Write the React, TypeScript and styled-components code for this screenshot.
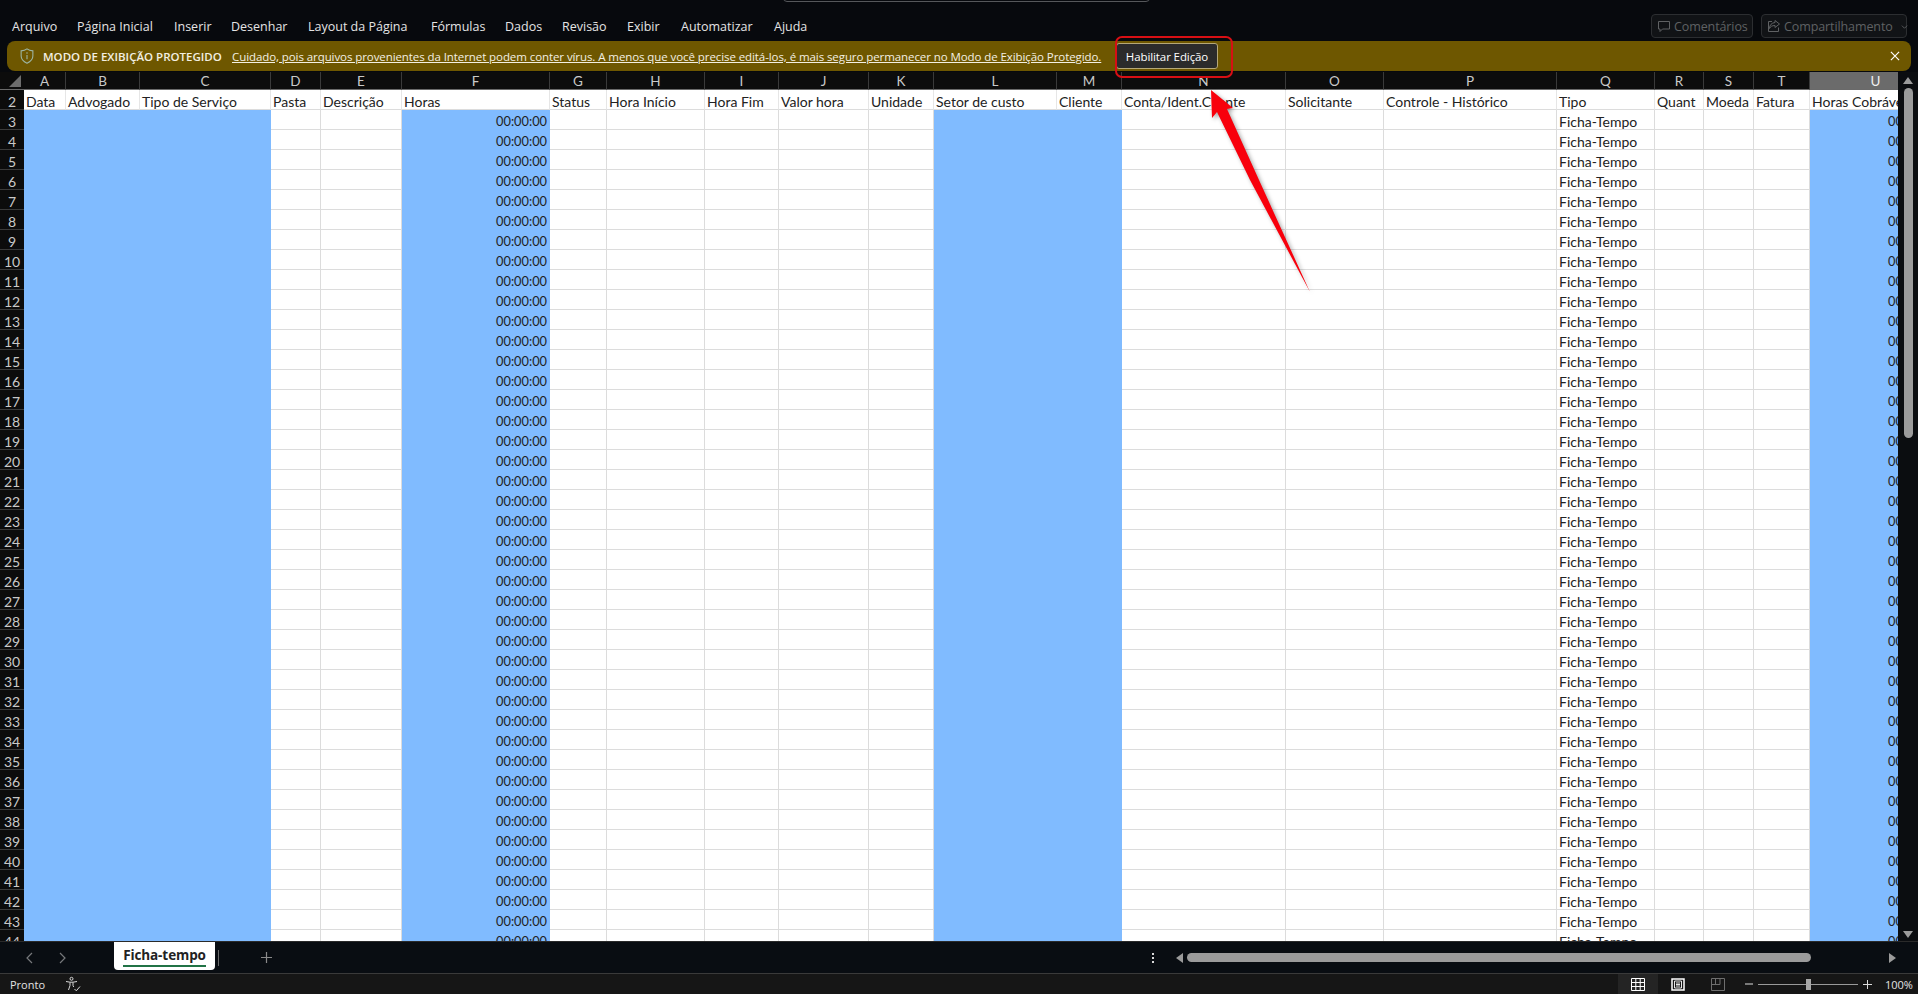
import React from "react";
import styled, { createGlobalStyle } from "styled-components";

const GlobalStyle = createGlobalStyle`
  html, body {
    margin: 0;
    height: 100%;
    overflow: hidden;
    background: #07090d;
  }
`;

const COLUMNS = [
  { name: "A", width: 42, title: "Data", fill: true },
  { name: "B", width: 74, title: "Advogado", fill: true },
  { name: "C", width: 131, title: "Tipo de Serviço", fill: true },
  { name: "D", width: 50, title: "Pasta" },
  { name: "E", width: 81, title: "Descrição" },
  { name: "F", width: 148, title: "Horas", fill: true, value: "00:00:00" },
  { name: "G", width: 57, title: "Status" },
  { name: "H", width: 98, title: "Hora Início" },
  { name: "I", width: 74, title: "Hora Fim" },
  { name: "J", width: 90, title: "Valor hora" },
  { name: "K", width: 65, title: "Unidade" },
  { name: "L", width: 123, title: "Setor de custo", fill: true },
  { name: "M", width: 65, title: "Cliente", fill: true },
  { name: "N", width: 164, title: "Conta/Ident.Cliente" },
  { name: "O", width: 98, title: "Solicitante" },
  { name: "P", width: 173, title: "Controle - Histórico" },
  { name: "Q", width: 98, title: "Tipo", text: "Ficha-Tempo" },
  { name: "R", width: 49, title: "Quant" },
  { name: "S", width: 50, title: "Moeda" },
  { name: "T", width: 56, title: "Fatura" },
  { name: "U", width: 132, title: "Horas Cobrável", fill: true, value: "00:00:00", selected: true },
];

const MENU = [
  { label: "Arquivo", width: 65 },
  { label: "Página Inicial", width: 97 },
  { label: "Inserir", width: 57 },
  { label: "Desenhar", width: 77 },
  { label: "Layout da Página", width: 123 },
  { label: "Fórmulas", width: 74 },
  { label: "Dados", width: 57 },
  { label: "Revisão", width: 65 },
  { label: "Exibir", width: 54 },
  { label: "Automatizar", width: 93 },
  { label: "Ajuda", width: 50 },
];

const ROWS = Array.from({ length: 42 }, (_, i) => i + 3);

const TEMPLATE = `24px ${COLUMNS.map((c) => `${c.width}px`).join(" ")}`;

const Page = styled.div`
  position: relative;
  display: flex;
  flex-direction: column;
  height: 994px;
  width: 1918px;
  overflow: hidden;
  background: #07090d;
  font-family: "Open Sans", "Noto Sans", sans-serif;
`;

const TopBar = styled.div`
  position: relative;
  flex: 0 0 41px;
  display: flex;
  align-items: center;
  justify-content: space-between;
  padding: 0 11px 0 12px;
  box-sizing: border-box;
`;

const SearchEdge = styled.div`
  position: absolute;
  left: 783px;
  top: -20px;
  width: 367px;
  height: 22px;
  box-sizing: border-box;
  border: 1px solid #55575a;
  border-radius: 4px;
`;

const Menu = styled.nav`
  display: flex;
  margin-top: 12px;
`;

const MenuItem = styled.span<{ $width: number }>`
  flex: 0 0 ${(p) => p.$width}px;
  font-size: 12.5px;
  color: #e4e4e4;
  white-space: nowrap;
`;

const Actions = styled.div`
  display: flex;
  gap: 8px;
  margin-top: 11px;
`;

const GhostButton = styled.div<{ $width: number }>`
  width: ${(p) => p.$width}px;
  height: 24px;
  box-sizing: border-box;
  display: flex;
  align-items: center;
  gap: 3px;
  padding-left: 5px;
  border: 1px solid #2c2e31;
  border-radius: 4px;
  background: #111316;
  color: #5f6163;
  font-size: 12.5px;
  letter-spacing: -0.1px;
  white-space: nowrap;
  svg {
    flex-shrink: 0;
  }
`;

const ShareLabel = styled.span`
  margin-right: 5px;
`;

const Banner = styled.div`
  flex: 0 0 30px;
  margin: 0 7px;
  display: flex;
  align-items: center;
  background: #6e5700;
  border-radius: 8px;
  padding-left: 13px;
  color: #f3efe2;
  font-size: 11.5px;
  white-space: nowrap;
`;

const BannerTitle = styled.strong`
  margin-left: 9px;
  font-weight: 600;
  width: 189px;
`;

const BannerLink = styled.span`
  text-decoration: underline;
  width: 884px;
  letter-spacing: -0.08px;
`;

const EnableButton = styled.div`
  width: 102px;
  height: 26px;
  box-sizing: border-box;
  display: flex;
  align-items: center;
  justify-content: center;
  background: #2b2b2b;
  border: 1px solid #b5a878;
  border-radius: 3px;
  color: #ffffff;
  font-size: 11.5px;
  letter-spacing: -0.1px;
`;

const CloseBox = styled.div`
  margin-left: auto;
  margin-right: 11px;
  display: flex;
  color: #ffffff;
`;

const Sheet = styled.div`
  flex: 1;
  min-height: 0;
  margin-top: 1px;
  display: flex;
  background: #ffffff;
`;

const Grid = styled.div`
  flex: 0 0 1898px;
  overflow: hidden;
  display: grid;
  grid-template-columns: ${TEMPLATE};
  grid-auto-rows: 20px;
  grid-template-rows: 18px 20px;
  align-content: start;
  font-family: Lato, "Open Sans", sans-serif;
  font-size: 14px;
  color: #222222;
`;

const Corner = styled.div`
  background: #0c0c0c;
  position: relative;
  overflow: hidden;
  border-bottom: 1px solid #6a6a6a;
  &::after {
    content: "";
    position: absolute;
    right: 3px;
    bottom: 2px;
    border-style: solid;
    border-width: 0 0 12px 12px;
    border-color: transparent transparent #6d6d6d transparent;
  }
`;

const ColumnHeader = styled.div<{ $selected?: boolean }>`
  box-sizing: border-box;
  display: flex;
  align-items: center;
  justify-content: center;
  background: ${(p) => (p.$selected ? "#6b6b6b" : "#0c0c0c")};
  color: ${(p) => (p.$selected ? "#f0f0f0" : "#c9c9c9")};
  border-right: 1px solid #3a3a3a;
  border-bottom: 1px solid #6a6a6a;
  font-size: 13.5px;
`;

const RowHeader = styled.div`
  box-sizing: border-box;
  display: flex;
  align-items: center;
  justify-content: center;
  padding-top: 3px;
  background: #0c0c0c;
  color: #c9c9c9;
  border-bottom: 1px solid #3a3a3a;
  font-size: 14px;
`;

const Cell = styled.div<{ $fill?: boolean; $right?: boolean }>`
  box-sizing: border-box;
  display: flex;
  align-items: center;
  justify-content: ${(p) => (p.$right ? "flex-end" : "flex-start")};
  padding: 3px 2px 0 2px;
  overflow: hidden;
  white-space: nowrap;
  font-size: ${(p) => (p.$right ? "12.8px" : "14px")};
  background: ${(p) => (p.$fill ? "#80bbff" : "#ffffff")};
  border-right: 1px solid ${(p) => (p.$fill ? "#80bbff" : "#dcdcdc")};
  border-bottom: 1px solid ${(p) => (p.$fill ? "#80bbff" : "#dcdcdc")};
`;

const TitleCell = styled(Cell)`
  background: #ffffff;
  border-right-color: #e6e6e6;
  border-bottom-color: #dcdcdc;
`;

const VScroll = styled.div`
  flex: 1;
  position: relative;
  background: #0b0d10;
  display: flex;
  flex-direction: column;
  align-items: center;
  justify-content: space-between;
  padding: 5px 0 3px;
  box-sizing: border-box;
`;

const VThumb = styled.div`
  position: absolute;
  top: 16px;
  left: 6px;
  width: 9px;
  height: 350px;
  border-radius: 5px;
  background: #9b9b9b;
`;

const Arrow = styled.span<{ $dir: "up" | "down" | "left" | "right" }>`
  width: 0;
  height: 0;
  border-style: solid;
  border-color: transparent;
  ${(p) => p.$dir === "up" && "border-width: 0 5px 7px 5px; border-bottom-color: #9b9b9b;"}
  ${(p) => p.$dir === "down" && "border-width: 7px 5px 0 5px; border-top-color: #9b9b9b;"}
  ${(p) => p.$dir === "left" && "border-width: 5px 7px 5px 0; border-right-color: #9b9b9b;"}
  ${(p) => p.$dir === "right" && "border-width: 5px 0 5px 7px; border-left-color: #9b9b9b;"}
`;

const TabBar = styled.div`
  flex: 0 0 32px;
  display: flex;
  background: #090d12;
  border-top: 1px solid #2a2a2a;
  box-sizing: border-box;
`;

const NavButtons = styled.div`
  flex: 0 0 114px;
  display: flex;
  align-items: center;
  gap: 22px;
  padding-left: 25px;
  box-sizing: border-box;
  color: #77797c;
`;

const Tab = styled.div`
  width: 101px;
  height: 28px;
  box-sizing: border-box;
  background: #ffffff;
  border-radius: 0 0 4px 4px;
  display: flex;
  align-items: center;
  justify-content: center;
  padding-bottom: 2px;
  font-size: 13.5px;
  font-weight: 700;
  color: #222222;
  position: relative;
  letter-spacing: -0.1px;
  &::after {
    content: "";
    position: absolute;
    left: 9px;
    right: 9px;
    bottom: 3px;
    height: 2px;
    background: #217346;
  }
`;

const TabDivider = styled.div`
  width: 1px;
  height: 16px;
  margin: 8px 0 0 3px;
  background: #6a6a6a;
`;

const AddSheet = styled.div`
  margin-left: 41px;
  display: flex;
  align-items: center;
  color: #8a8a8a;
`;

const HScroll = styled.div`
  margin-left: auto;
  width: 766px;
  display: flex;
  align-items: center;
  gap: 0;
  padding-right: 22px;
  box-sizing: border-box;
`;

const Dots = styled.div`
  display: flex;
  flex-direction: column;
  gap: 2px;
  margin-right: 22px;
  span {
    width: 2px;
    height: 2px;
    background: #d8d8d8;
  }
`;

const HTrack = styled.div`
  flex: 1;
  display: flex;
  align-items: center;
  margin-left: 4px;
`;

const HThumb = styled.div`
  width: 624px;
  height: 9px;
  border-radius: 5px;
  background: #9b9b9b;
`;

const StatusBar = styled.div`
  flex: 0 0 21px;
  display: flex;
  align-items: center;
  background: #161616;
  border-top: 1px solid #3a3a3a;
  box-sizing: border-box;
  color: #e2e2e2;
  font-size: 11px;
`;

const Ready = styled.span`
  margin-left: 10px;
  width: 55px;
`;

const ViewButton = styled.div<{ $active?: boolean; $dim?: boolean }>`
  width: 40px;
  height: 100%;
  display: flex;
  align-items: center;
  justify-content: center;
  background: ${(p) => (p.$active ? "#242424" : "transparent")};
  color: ${(p) => (p.$dim ? "#6e6e6e" : "#ffffff")};
`;

const ViewGroup = styled.div`
  margin-left: auto;
  height: 100%;
  display: flex;
  margin-right: 7px;
`;

const ZoomSlider = styled.div`
  display: flex;
  align-items: center;
  gap: 5px;
  margin-right: 13px;
  color: #dddddd;
`;

const SliderTrack = styled.div`
  position: relative;
  width: 100px;
  height: 1px;
  background: #9a9a9a;
`;

const SliderKnob = styled.div`
  position: absolute;
  left: 48px;
  top: -5px;
  width: 5px;
  height: 11px;
  background: #a8a8a8;
`;

const Percent = styled.span`
  width: 33px;
`;

/* annotation drawn over the screenshot */
const Highlight = styled.div`
  position: absolute;
  left: 1115px;
  top: 36px;
  width: 118px;
  height: 42px;
  box-sizing: border-box;
  border: 2px solid #d80f14;
  border-radius: 7px;
`;

const RedArrow = styled.svg`
  position: absolute;
  left: 1190px;
  top: 80px;
  overflow: visible;
  filter: drop-shadow(2px 2px 2px rgba(0, 0, 0, 0.35));
`;

const Chevron = ({ d }: { d: string }) => (
  <svg width="10" height="14" viewBox="0 0 10 14" fill="none" stroke="currentColor" strokeWidth="1.2">
    <path d={d} />
  </svg>
);

export default function App() {
  return (
    <Page>
      <GlobalStyle />
      <TopBar>
        <SearchEdge />
        <Menu>
          {MENU.map((m) => (
            <MenuItem key={m.label} $width={m.width}>
              {m.label}
            </MenuItem>
          ))}
        </Menu>
        <Actions>
          <GhostButton $width={102}>
            <svg width="14" height="14" viewBox="0 0 14 14" fill="none" stroke="currentColor">
              <path d="M1.5 2.5h11v7.5h-7l-2.5 2.5v-2.5h-1.5z" />
            </svg>
            Comentários
          </GhostButton>
          <GhostButton $width={146}>
            <svg width="14" height="14" viewBox="0 0 14 14" fill="none" stroke="currentColor">
              <path d="M8 1.5l4.5 3.500-4.500 3.500v-2c-3 0-4.500 1-5.500 3 0-3.500 2-5.500 5.500-6z" />
              <path d="M5 2.500h-3.500v10h10v-4" />
            </svg>
            <ShareLabel>Compartilhamento</ShareLabel>
            <svg width="7" height="7" viewBox="0 0 8 8" fill="none" stroke="currentColor">
              <path d="M1 3l3 3 3-3" />
            </svg>
          </GhostButton>
        </Actions>
      </TopBar>

      <Banner>
        <svg width="14" height="16" viewBox="0 0 13 15" fill="none" stroke="#9db7a6" strokeWidth="1">
          <path d="M6.500.8c1.500 1.200 3.500 1.800 5.500 1.900v4.800c0 3-2.300 5.300-5.500 6.700-3.200-1.400-5.500-3.700-5.500-6.700v-4.800c2-.1 4-.7 5.500-1.900z" />
          <path d="M6.500 6.500v4M6.500 4v1.300" />
        </svg>
        <BannerTitle>MODO DE EXIBIÇÃO PROTEGIDO</BannerTitle>
        <BannerLink>
          Cuidado, pois arquivos provenientes da Internet podem conter vírus. A menos que você precise editá-los, é mais seguro permanecer no Modo de  Exibição Protegido.
        </BannerLink>
        <EnableButton>Habilitar Edição</EnableButton>
        <CloseBox>
          <svg width="10" height="10" viewBox="0 0 11 11" stroke="currentColor" strokeWidth="1.3">
            <path d="M1 1l9 9M10 1l-9 9" />
          </svg>
        </CloseBox>
      </Banner>

      <Sheet>
        <Grid>
          <Corner />
          {COLUMNS.map((c) => (
            <ColumnHeader key={c.name} $selected={c.selected}>
              {c.name}
            </ColumnHeader>
          ))}
          <RowHeader>2</RowHeader>
          {COLUMNS.map((c) => (
            <TitleCell key={c.name}>{c.title}</TitleCell>
          ))}
          {ROWS.map((row) => (
            <React.Fragment key={row}>
              <RowHeader>{row}</RowHeader>
              {COLUMNS.map((c) => (
                <Cell key={c.name} $fill={c.fill} $right={!!c.value}>
                  {c.value ?? c.text ?? ""}
                </Cell>
              ))}
            </React.Fragment>
          ))}
        </Grid>
        <VScroll>
          <Arrow $dir="up" />
          <VThumb />
          <Arrow $dir="down" />
        </VScroll>
      </Sheet>

      <TabBar>
        <NavButtons>
          <Chevron d="M7 2L2 7l5 5" />
          <Chevron d="M3 2l5 5-5 5" />
        </NavButtons>
        <Tab>Ficha-tempo</Tab>
        <TabDivider />
        <AddSheet>
          <svg width="13" height="13" viewBox="0 0 13 13" stroke="currentColor" strokeWidth="1.2">
            <path d="M6.500 1v11M1 6.500h11" />
          </svg>
        </AddSheet>
        <HScroll>
          <Dots>
            <span />
            <span />
            <span />
          </Dots>
          <Arrow $dir="left" />
          <HTrack>
            <HThumb />
          </HTrack>
          <Arrow $dir="right" />
        </HScroll>
      </TabBar>

      <StatusBar>
        <Ready>Pronto</Ready>
        <svg width="16" height="16" viewBox="0 0 16 16" fill="none" stroke="#d8d8d8" strokeWidth="1">
          <circle cx="6.500" cy="2.800" r="1.500" />
          <path d="M1 5.500l4 .7h3l4-.7M5 6.500v3l-1.500 4.500M8 6.500v3l.7 1.500" />
          <path d="M9.500 13l1.800 1.800 3.700-4.300" />
        </svg>
        <ViewGroup>
          <ViewButton $active>
            <svg width="14" height="13" viewBox="0 0 14 13" fill="none" stroke="currentColor">
              <path d="M.5.500h13v12h-13zM.5 4.500h13M.5 8.500h13M4.800.5v12M9.200.5v12" />
            </svg>
          </ViewButton>
          <ViewButton>
            <svg width="14" height="13" viewBox="0 0 14 13" fill="none" stroke="currentColor">
              <path d="M1 1h12v11h-12z" strokeWidth="1.5" />
              <path d="M3.500 3h7v7h-7zM5 5h4M5 6.500h4M5 8h4" strokeWidth="0.9" />
            </svg>
          </ViewButton>
          <ViewButton $dim>
            <svg width="14" height="13" viewBox="0 0 14 13" fill="none" stroke="currentColor">
              <path d="M.5.500h13v12h-13zM.5 6.500h8.500v-6M4.500.5v6" />
            </svg>
          </ViewButton>
        </ViewGroup>
        <ZoomSlider>
          <svg width="8" height="8" viewBox="0 0 8 8" stroke="currentColor">
            <path d="M0 4h8" />
          </svg>
          <SliderTrack>
            <SliderKnob />
          </SliderTrack>
          <svg width="9" height="9" viewBox="0 0 9 9" stroke="currentColor">
            <path d="M0 4.500h9M4.500 0v9" />
          </svg>
        </ZoomSlider>
        <Percent>100%</Percent>
      </StatusBar>

      <Highlight />
      <RedArrow width="140" height="220" viewBox="0 0 140 220">
        <path d="M21 10L43 28 37 29 69 100 120 212 60 100 27 32 22 38z" fill="#f8000c" />
      </RedArrow>
    </Page>
  );
}
